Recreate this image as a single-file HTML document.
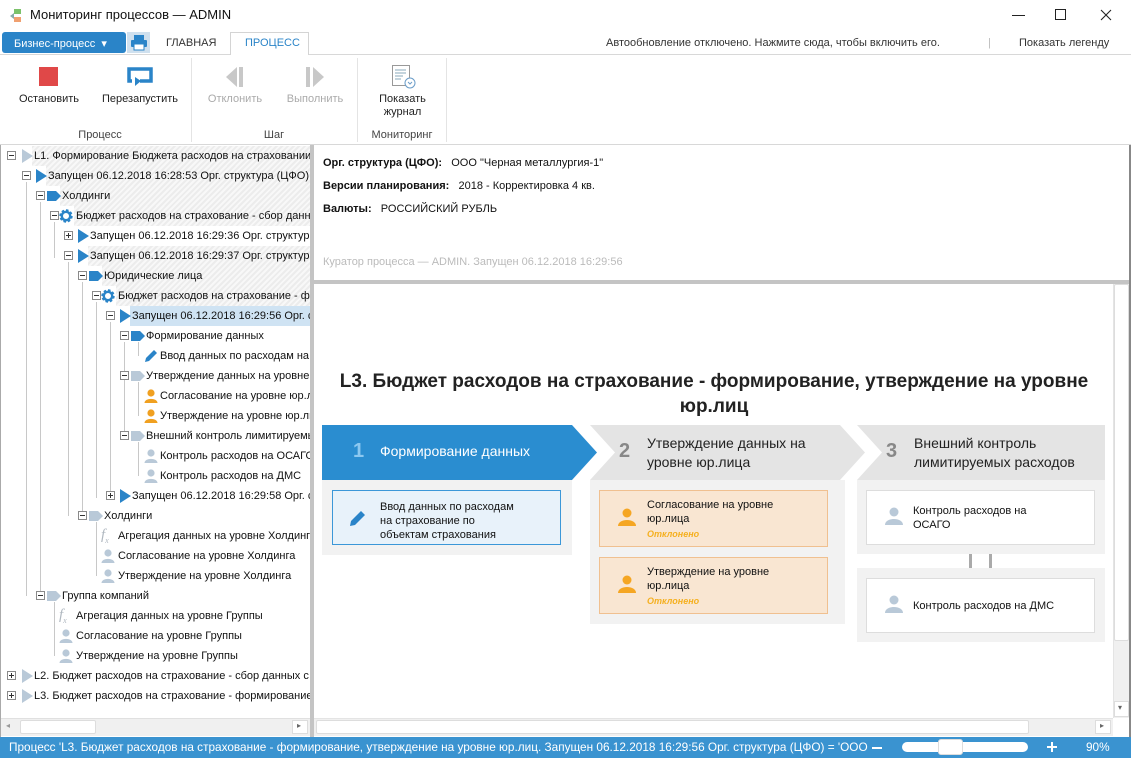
<!DOCTYPE html>
<html><head><meta charset="utf-8">
<style>
*{margin:0;padding:0;box-sizing:border-box}
body{width:1131px;height:758px;overflow:hidden;background:#fff;font-family:"Liberation Sans","DejaVu Sans",sans-serif;font-size:11px;color:#111;position:relative}
.a{position:absolute}
.t{position:absolute;white-space:nowrap}
.ex{position:absolute;width:9px;height:9px;border:1px solid #8a8a8a;background:#fff}
.ex:before{content:"";position:absolute;left:1px;top:3px;width:5px;height:1px;background:#333}
.ex.p:after{content:"";position:absolute;left:3px;top:1px;width:1px;height:5px;background:#333}
.hat{position:absolute;height:20px;background:repeating-linear-gradient(135deg,#ececec 0 2px,#f8f8f8 2px 4px)}
.ic{position:absolute;width:16px;height:16px}
.vl{position:absolute;width:1px;background:#c8c8c8}
.rb{position:absolute;text-align:center;font-size:11px;color:#222}
.card{position:absolute;font-size:11px;line-height:14px}
</style></head><body>
<svg width="0" height="0" style="position:absolute">
<defs>
<path id="tri" d="M3 1 L14 8 L3 15 Z"/>
<path id="tag" d="M1 3 H10 L15 8 L10 13 H1 Z"/>
<g id="per"><circle cx="8" cy="5" r="3.6"/><path d="M1.5 15 C1.5 9.5 14.5 9.5 14.5 15 Z"/></g>
<g id="gear"><circle cx="8" cy="8" r="5" fill="none" stroke-width="3.4" stroke="currentColor" stroke-dasharray="2.2 1.7"/><circle cx="8" cy="8" r="4.2" fill="none" stroke-width="2.4" stroke="currentColor"/></g>
</defs></svg>

<!-- title bar -->
<div class="a" style="left:0;top:0;width:1131px;height:31px;background:#fff"></div>
<svg class="a" style="left:9px;top:8px" width="16" height="16"><rect x="5" y="1" width="7" height="5" fill="#7bc26a"/><rect x="5" y="9" width="7" height="5" fill="#f0a070"/><path d="M1 8 L5 5 V11Z" fill="#8aa"/></svg>
<div class="t" style="left:30px;top:7px;font-size:13px;color:#111">Мониторинг процессов — ADMIN</div>
<div class="a" style="left:1012px;top:15px;width:13px;height:1px;background:#222"></div>
<div class="a" style="left:1055px;top:9px;width:11px;height:11px;border:1px solid #222"></div>
<svg class="a" style="left:1100px;top:9px" width="12" height="12"><path d="M1 1L11 11M11 1L1 11" stroke="#222" stroke-width="1.1"/></svg>

<!-- tab row -->
<div class="a" style="left:2px;top:32px;width:124px;height:21px;background:#2a84c8;border-radius:3px"></div>
<div class="t" style="left:14px;top:37px;color:#fff;font-size:11px">Бизнес-процесс &nbsp;▾</div>
<div class="a" style="left:127px;top:32px;width:23px;height:21px;background:#cfe0ee"></div>
<svg class="a" style="left:130px;top:34px" width="18" height="17"><rect x="4" y="1" width="10" height="5" fill="#2a84c8"/><rect x="1" y="6" width="16" height="7" rx="1" fill="#2a84c8"/><rect x="4" y="10" width="10" height="6" fill="#fff" stroke="#2a84c8"/></svg>
<div class="t" style="left:166px;top:37px;color:#333">ГЛАВНАЯ</div>
<div class="a" style="left:230px;top:32px;width:79px;height:23px;background:#fff;border:1px solid #d4d4d4;border-bottom:none"></div>
<div class="t" style="left:245px;top:37px;color:#2a84c8">ПРОЦЕСС</div>
<div class="a" style="left:0;top:54px;width:230px;height:1px;background:#d8d8d8"></div>
<div class="a" style="left:309px;top:54px;width:822px;height:1px;background:#d8d8d8"></div>
<div class="t" style="left:606px;top:37px;color:#333">Автообновление отключено. Нажмите сюда, чтобы включить его.</div>
<div class="t" style="left:988px;top:37px;color:#bbb">|</div>
<div class="t" style="left:1019px;top:37px;color:#333">Показать легенду</div>

<!-- ribbon -->
<div class="a" style="left:39px;top:67px;width:19px;height:19px;background:#e04848"></div>
<svg class="a" style="left:126px;top:66px" width="28" height="22"><path d="M6 15 H3 V3 H25 V15 H14" fill="none" stroke="#2a84c8" stroke-width="3.5"/><path d="M9 11 L15 15 L9 20Z" fill="#2a84c8"/></svg>
<svg class="a" style="left:225px;top:66px" width="20" height="22"><path d="M1 11 L12 1 V21Z" fill="#c8c8c8"/><rect x="14" y="1" width="4" height="20" fill="#c8c8c8"/></svg>
<svg class="a" style="left:305px;top:66px" width="20" height="22"><rect x="1" y="1" width="4" height="20" fill="#c8c8c8"/><path d="M8 1 L19 11 L8 21Z" fill="#c8c8c8"/></svg>
<svg class="a" style="left:391px;top:64px" width="26" height="26"><rect x="1.5" y="1.5" width="17" height="20" fill="#fff" stroke="#999"/><path d="M4 6H15M4 9H15M4 12H12M4 15H10" stroke="#8ab" /><circle cx="19" cy="19" r="5" fill="#fff" stroke="#6a9cc8"/><path d="M17 18 L19 20 L21 18" fill="none" stroke="#6a9cc8"/></svg>
<div class="rb" style="left:10px;top:93px;width:78px">Остановить</div>
<div class="rb" style="left:96px;top:93px;width:88px">Перезапустить</div>
<div class="rb" style="left:200px;top:93px;width:70px;color:#aaa">Отклонить</div>
<div class="rb" style="left:280px;top:93px;width:70px;color:#aaa">Выполнить</div>
<div class="rb" style="left:365px;top:93px;width:75px;line-height:13px">Показать<br>журнал</div>
<div class="rb" style="left:60px;top:129px;width:80px;color:#444">Процесс</div>
<div class="rb" style="left:234px;top:129px;width:80px;color:#444">Шаг</div>
<div class="rb" style="left:362px;top:129px;width:80px;color:#444">Мониторинг</div>
<div class="vl" style="left:191px;top:58px;height:84px;background:#e4e4e4"></div>
<div class="vl" style="left:357px;top:58px;height:84px;background:#e4e4e4"></div>
<div class="vl" style="left:446px;top:58px;height:84px;background:#e4e4e4"></div>
<div class="a" style="left:0;top:144px;width:1131px;height:1px;background:#d8d8d8"></div>

<!-- left tree -->
<div class="a" style="left:0;top:145px;width:310px;height:593px;background:#fff;border-left:1px solid #aaa"></div>
<div class="vl" style="left:26px;top:182px;height:414px"></div>
<div class="vl" style="left:40px;top:202px;height:394px"></div>
<div class="vl" style="left:54px;top:222px;height:36px"></div>
<div class="vl" style="left:68px;top:262px;height:254px"></div>
<div class="vl" style="left:82px;top:282px;height:234px"></div>
<div class="vl" style="left:96px;top:302px;height:196px"></div>
<div class="vl" style="left:110px;top:322px;height:174px"></div>
<div class="vl" style="left:124px;top:342px;height:96px"></div>
<div class="vl" style="left:138px;top:342px;height:14px"></div>
<div class="vl" style="left:138px;top:382px;height:34px"></div>
<div class="vl" style="left:138px;top:442px;height:34px"></div>
<div class="vl" style="left:96px;top:522px;height:54px"></div>
<div class="vl" style="left:54px;top:602px;height:54px"></div>

<div class="hat" style="left:32px;top:146px;width:278px"></div>
<div class="hat" style="left:46px;top:166px;width:264px"></div>
<div class="hat" style="left:60px;top:186px;width:250px"></div>
<div class="hat" style="left:74px;top:206px;width:236px"></div>
<div class="hat" style="left:88px;top:246px;width:222px"></div>
<div class="hat" style="left:102px;top:266px;width:208px"></div>
<div class="hat" style="left:116px;top:286px;width:194px"></div>
<div class="a" style="left:130px;top:306px;width:180px;height:20px;background:#cfe3f3"></div>

<div style="position:absolute;left:0;top:0;width:310px;height:740px;overflow:hidden">
<div class="ex" style="left:7px;top:151px"></div><svg class="ic" style="left:19px;top:148px"><use href="#tri" fill="#b9c9d8"/></svg><div class="t" style="left:34px;top:150px">L1. Формирование Бюджета расходов на страховании на 2019 год</div>
<div class="ex" style="left:22px;top:171px"></div><svg class="ic" style="left:33px;top:168px"><use href="#tri" fill="#2a84c8"/></svg><div class="t" style="left:48px;top:170px">Запущен 06.12.2018 16:28:53 Орг. структура (ЦФО)</div>
<div class="ex" style="left:36px;top:191px"></div><svg class="ic" style="left:46px;top:188px"><use href="#tag" fill="#2a84c8"/></svg><div class="t" style="left:62px;top:190px">Холдинги</div>
<div class="ex" style="left:50px;top:211px"></div><svg class="ic" style="left:58px;top:208px;color:#2a84c8"><use href="#gear"/></svg><div class="t" style="left:76px;top:210px">Бюджет расходов на страхование - сбор данных</div>
<div class="ex p" style="left:64px;top:231px"></div><svg class="ic" style="left:75px;top:228px"><use href="#tri" fill="#2a84c8"/></svg><div class="t" style="left:90px;top:230px">Запущен 06.12.2018 16:29:36 Орг. структура</div>
<div class="ex" style="left:64px;top:251px"></div><svg class="ic" style="left:75px;top:248px"><use href="#tri" fill="#2a84c8"/></svg><div class="t" style="left:90px;top:250px">Запущен 06.12.2018 16:29:37 Орг. структура</div>
<div class="ex" style="left:78px;top:271px"></div><svg class="ic" style="left:88px;top:268px"><use href="#tag" fill="#2a84c8"/></svg><div class="t" style="left:104px;top:270px">Юридические лица</div>
<div class="ex" style="left:92px;top:291px"></div><svg class="ic" style="left:100px;top:288px;color:#2a84c8"><use href="#gear"/></svg><div class="t" style="left:118px;top:290px">Бюджет расходов на страхование - формирование</div>
<div class="ex" style="left:106px;top:311px"></div><svg class="ic" style="left:117px;top:308px"><use href="#tri" fill="#2a84c8"/></svg><div class="t" style="left:132px;top:310px">Запущен 06.12.2018 16:29:56 Орг. структура</div>
<div class="ex" style="left:120px;top:331px"></div><svg class="ic" style="left:130px;top:328px"><use href="#tag" fill="#2a84c8"/></svg><div class="t" style="left:146px;top:330px">Формирование данных</div>
<svg class="ic" style="left:143px;top:348px"><path d="M2 14 L3 10 L11 2 L14 5 L6 13Z" fill="#2a84c8"/></svg><div class="t" style="left:160px;top:350px">Ввод данных по расходам на страхование</div>
<div class="ex" style="left:120px;top:371px"></div><svg class="ic" style="left:130px;top:368px"><use href="#tag" fill="#b9c9d8"/></svg><div class="t" style="left:146px;top:370px">Утверждение данных на уровне юр.лица</div>
<svg class="ic" style="left:143px;top:388px"><use href="#per" fill="#f0a020"/></svg><div class="t" style="left:160px;top:390px">Согласование на уровне юр.лица</div>
<svg class="ic" style="left:143px;top:408px"><use href="#per" fill="#f0a020"/></svg><div class="t" style="left:160px;top:410px">Утверждение на уровне юр.лица</div>
<div class="ex" style="left:120px;top:431px"></div><svg class="ic" style="left:130px;top:428px"><use href="#tag" fill="#b9c9d8"/></svg><div class="t" style="left:146px;top:430px">Внешний контроль лимитируемых расходов</div>
<svg class="ic" style="left:143px;top:448px"><use href="#per" fill="#b9c9d8"/></svg><div class="t" style="left:160px;top:450px">Контроль расходов на ОСАГО</div>
<svg class="ic" style="left:143px;top:468px"><use href="#per" fill="#b9c9d8"/></svg><div class="t" style="left:160px;top:470px">Контроль расходов на ДМС</div>
<div class="ex p" style="left:106px;top:491px"></div><svg class="ic" style="left:117px;top:488px"><use href="#tri" fill="#2a84c8"/></svg><div class="t" style="left:132px;top:490px">Запущен 06.12.2018 16:29:58 Орг. структура</div>
<div class="ex" style="left:78px;top:511px"></div><svg class="ic" style="left:88px;top:508px"><use href="#tag" fill="#b9c9d8"/></svg><div class="t" style="left:104px;top:510px">Холдинги</div>
<div class="t" style="left:101px;top:527px;font-family:'Liberation Serif',serif;font-style:italic;font-size:15px;color:#b0b8c0">f<sub style="font-size:8px">x</sub></div><div class="t" style="left:118px;top:530px">Агрегация данных на уровне Холдинга</div>
<svg class="ic" style="left:100px;top:548px"><use href="#per" fill="#b9c9d8"/></svg><div class="t" style="left:118px;top:550px">Согласование на уровне Холдинга</div>
<svg class="ic" style="left:100px;top:568px"><use href="#per" fill="#b9c9d8"/></svg><div class="t" style="left:118px;top:570px">Утверждение на уровне Холдинга</div>
<div class="ex" style="left:36px;top:591px"></div><svg class="ic" style="left:46px;top:588px"><use href="#tag" fill="#b9c9d8"/></svg><div class="t" style="left:62px;top:590px">Группа компаний</div>
<div class="t" style="left:59px;top:607px;font-family:'Liberation Serif',serif;font-style:italic;font-size:15px;color:#b0b8c0">f<sub style="font-size:8px">x</sub></div><div class="t" style="left:76px;top:610px">Агрегация данных на уровне Группы</div>
<svg class="ic" style="left:58px;top:628px"><use href="#per" fill="#b9c9d8"/></svg><div class="t" style="left:76px;top:630px">Согласование на уровне Группы</div>
<svg class="ic" style="left:58px;top:648px"><use href="#per" fill="#b9c9d8"/></svg><div class="t" style="left:76px;top:650px">Утверждение на уровне Группы</div>
<div class="ex p" style="left:7px;top:671px"></div><svg class="ic" style="left:19px;top:668px"><use href="#tri" fill="#b9c9d8"/></svg><div class="t" style="left:34px;top:670px">L2. Бюджет расходов на страхование - сбор данных с</div>
<div class="ex p" style="left:7px;top:691px"></div><svg class="ic" style="left:19px;top:688px"><use href="#tri" fill="#b9c9d8"/></svg><div class="t" style="left:34px;top:690px">L3. Бюджет расходов на страхование - формирование</div>
</div>
<div class="a" style="left:1px;top:718px;width:309px;height:18px;background:#f0f0f0;border-top:1px solid #e0e0e0"></div>
<div class="a" style="left:20px;top:720px;width:76px;height:14px;background:#fff;border:1px solid #ddd;border-radius:2px"></div>
<div class="t" style="left:6px;top:721px;font-size:8px;color:#999">◂</div>
<div class="a" style="left:292px;top:720px;width:16px;height:14px;background:#fff;border:1px solid #ddd"></div>
<div class="t" style="left:297px;top:721px;font-size:8px;color:#666">▸</div>

<!-- splitter -->
<div class="a" style="left:310px;top:145px;width:4px;height:593px;background:#c4c4c4"></div>
<div class="a" style="left:314px;top:280px;width:817px;height:4px;background:#c4c4c4"></div>
<div class="a" style="left:1129px;top:145px;width:2px;height:593px;background:#888"></div>

<!-- details -->
<div class="t" style="left:323px;top:157px"><b>Орг. структура (ЦФО):</b>&nbsp;&nbsp; ООО "Черная металлургия-1"</div>
<div class="t" style="left:323px;top:180px"><b>Версии планирования:</b>&nbsp;&nbsp; 2018 - Корректировка 4 кв.</div>
<div class="t" style="left:323px;top:203px"><b>Валюты:</b>&nbsp;&nbsp; РОССИЙСКИЙ РУБЛЬ</div>
<div class="t" style="left:323px;top:256px;color:#bbb">Куратор процесса — ADMIN. Запущен 06.12.2018 16:29:56</div>

<!-- diagram -->
<div class="t" style="left:314px;top:369px;width:800px;text-align:center;white-space:normal;font-size:19px;font-weight:bold;line-height:25px;color:#222">L3. Бюджет расходов на страхование - формирование, утверждение на уровне юр.лиц</div>

<svg class="a" style="left:320px;top:424px" width="790" height="60">
<path d="M2 1 H252 L277 28.5 L252 56 H2Z" fill="#2a8dd0"/>
<path d="M270 1 H520 L545 28.5 L520 56 H270 L295 28.5Z" fill="#e4e4e4"/>
<path d="M537 1 H785 V56 H537 L562 28.5Z" fill="#e4e4e4"/>
</svg>
<div class="t" style="left:353px;top:440px;font-size:20px;font-weight:bold;color:#8cc8f0">1</div>
<div class="t" style="left:380px;top:443px;font-size:14px;color:#fff">Формирование данных</div>
<div class="t" style="left:619px;top:440px;font-size:20px;font-weight:bold;color:#888">2</div>
<div class="t" style="left:647px;top:434px;font-size:14px;color:#222;line-height:19px">Утверждение данных на<br>уровне юр.лица</div>
<div class="t" style="left:886px;top:440px;font-size:20px;font-weight:bold;color:#888">3</div>
<div class="t" style="left:914px;top:434px;font-size:14px;color:#222;line-height:19px">Внешний контроль<br>лимитируемых расходов</div>

<div class="a" style="left:322px;top:480px;width:250px;height:75px;background:#f2f2f2"></div>
<div class="a" style="left:590px;top:480px;width:255px;height:144px;background:#f2f2f2"></div>
<div class="a" style="left:857px;top:480px;width:248px;height:74px;background:#f2f2f2"></div>
<div class="a" style="left:857px;top:568px;width:248px;height:74px;background:#f2f2f2"></div>
<div class="a" style="left:969px;top:554px;width:3px;height:14px;background:#aaa"></div>
<div class="a" style="left:989px;top:554px;width:3px;height:14px;background:#aaa"></div>

<div class="a" style="left:332px;top:490px;width:229px;height:55px;background:#e8f2fa;border:1px solid #3b97d8"></div>
<svg class="a" style="left:348px;top:508px" width="20" height="20"><path d="M2 18 L3 13 L13 3 L17 7 L7 17Z" fill="#2a84c8"/></svg>
<div class="card" style="left:380px;top:500px">Ввод данных по расходам<br>на страхование по<br>объектам страхования</div>

<div class="a" style="left:599px;top:490px;width:229px;height:57px;background:#f9e6d2;border:1px solid #f0c090"></div>
<svg class="a" style="left:617px;top:507px" width="20" height="20"><circle cx="10" cy="6" r="4.5" fill="#f5a623"/><path d="M1 19 C1 11 19 11 19 19Z" fill="#f5a623"/></svg>
<div class="card" style="left:647px;top:498px">Согласование на уровне<br>юр.лица</div>
<div class="t" style="left:647px;top:529px;font-size:9px;font-style:italic;font-weight:bold;color:#f5b020">Отклонено</div>

<div class="a" style="left:599px;top:557px;width:229px;height:57px;background:#f9e6d2;border:1px solid #f0c090"></div>
<svg class="a" style="left:617px;top:574px" width="20" height="20"><circle cx="10" cy="6" r="4.5" fill="#f5a623"/><path d="M1 19 C1 11 19 11 19 19Z" fill="#f5a623"/></svg>
<div class="card" style="left:647px;top:565px">Утверждение на уровне<br>юр.лица</div>
<div class="t" style="left:647px;top:596px;font-size:9px;font-style:italic;font-weight:bold;color:#f5b020">Отклонено</div>

<div class="a" style="left:866px;top:490px;width:229px;height:55px;background:#fff;border:1px solid #ddd"></div>
<svg class="a" style="left:884px;top:506px" width="20" height="20"><circle cx="10" cy="6" r="4.5" fill="#b9c9d8"/><path d="M1 19 C1 11 19 11 19 19Z" fill="#b9c9d8"/></svg>
<div class="card" style="left:913px;top:504px">Контроль расходов на<br>ОСАГО</div>

<div class="a" style="left:866px;top:578px;width:229px;height:55px;background:#fff;border:1px solid #ddd"></div>
<svg class="a" style="left:884px;top:594px" width="20" height="20"><circle cx="10" cy="6" r="4.5" fill="#b9c9d8"/><path d="M1 19 C1 11 19 11 19 19Z" fill="#b9c9d8"/></svg>
<div class="card" style="left:913px;top:599px">Контроль расходов на ДМС</div>

<!-- right scrollbars -->
<div class="a" style="left:1113px;top:284px;width:16px;height:434px;background:#f0f0f0;border-left:1px solid #e4e4e4"></div>
<div class="a" style="left:1114px;top:284px;width:15px;height:357px;background:#fff;border:1px solid #ddd;border-radius:2px"></div>
<div class="a" style="left:1114px;top:701px;width:15px;height:16px;background:#fff;border:1px solid #ddd"></div>
<div class="t" style="left:1118px;top:703px;font-size:8px;color:#666">▾</div>
<div class="a" style="left:314px;top:718px;width:799px;height:18px;background:#f0f0f0;border-top:1px solid #e4e4e4"></div>
<div class="a" style="left:316px;top:720px;width:713px;height:14px;background:#fff;border:1px solid #ddd;border-radius:2px"></div>
<div class="a" style="left:1095px;top:720px;width:16px;height:14px;background:#fff;border:1px solid #ddd"></div>
<div class="t" style="left:1100px;top:721px;font-size:8px;color:#666">▸</div>

<!-- status bar -->
<div class="a" style="left:0;top:737px;width:1131px;height:21px;background:#3a93d0"></div>
<div class="t" style="left:9px;top:740px;color:#fff;font-size:11.8px">Процесс 'L3. Бюджет расходов на страхование - формирование, утверждение на уровне юр.лиц. Запущен 06.12.2018 16:29:56 Орг. структура (ЦФО) = 'ООО</div>
<div class="a" style="left:872px;top:747px;width:10px;height:2px;background:#fff"></div>
<div class="a" style="left:902px;top:742px;width:126px;height:10px;background:#fff;border-radius:5px"></div>
<div class="a" style="left:938px;top:739px;width:25px;height:16px;background:#fff;border:1px solid #ddd;border-radius:3px"></div>
<div class="a" style="left:1047px;top:746px;width:10px;height:2px;background:#fff"></div>
<div class="a" style="left:1051px;top:742px;width:2px;height:10px;background:#fff"></div>
<div class="t" style="left:1086px;top:740px;color:#fff;font-size:11.8px">90%</div>
</body></html>
